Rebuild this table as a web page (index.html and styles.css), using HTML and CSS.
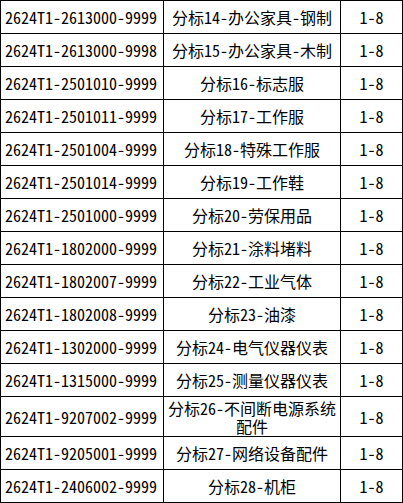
FILE: index.html
```
<!DOCTYPE html>
<html lang="zh-CN">
<head>
<meta charset="utf-8">
<link rel="stylesheet" href="styles.css">
</head>
<body>
<table class="grid">
<colgroup><col class="c1"><col class="c2"><col class="c3"></colgroup>
<tbody>
<tr><td class="code">2624T1-2613000-9999</td><td class="name">分标14-办公家具-钢制</td><td class="num">1-8</td></tr>
<tr><td class="code">2624T1-2613000-9998</td><td class="name">分标15-办公家具-木制</td><td class="num">1-8</td></tr>
<tr><td class="code">2624T1-2501010-9999</td><td class="name">分标16-标志服</td><td class="num">1-8</td></tr>
<tr><td class="code">2624T1-2501011-9999</td><td class="name">分标17-工作服</td><td class="num">1-8</td></tr>
<tr><td class="code">2624T1-2501004-9999</td><td class="name">分标18-特殊工作服</td><td class="num">1-8</td></tr>
<tr><td class="code">2624T1-2501014-9999</td><td class="name">分标19-工作鞋</td><td class="num">1-8</td></tr>
<tr><td class="code">2624T1-2501000-9999</td><td class="name">分标20-劳保用品</td><td class="num">1-8</td></tr>
<tr><td class="code">2624T1-1802000-9999</td><td class="name">分标21-涂料堵料</td><td class="num">1-8</td></tr>
<tr><td class="code">2624T1-1802007-9999</td><td class="name">分标22-工业气体</td><td class="num">1-8</td></tr>
<tr><td class="code">2624T1-1802008-9999</td><td class="name">分标23-油漆</td><td class="num">1-8</td></tr>
<tr><td class="code">2624T1-1302000-9999</td><td class="name">分标24-电气仪器仪表</td><td class="num">1-8</td></tr>
<tr><td class="code">2624T1-1315000-9999</td><td class="name">分标25-测量仪器仪表</td><td class="num">1-8</td></tr>
<tr class="tall"><td class="code">2624T1-9207002-9999</td><td class="name">分标26-不间断电源系统配件</td><td class="num">1-8</td></tr>
<tr><td class="code">2624T1-9205001-9999</td><td class="name">分标27-网络设备配件</td><td class="num">1-8</td></tr>
<tr><td class="code">2624T1-2406002-9999</td><td class="name">分标28-机柜</td><td class="num">1-8</td></tr>
</tbody>
</table>
</body>
</html>
```
FILE: styles.css
```
html, body {
  margin: 0;
  padding: 0;
  background: #fff;
}
.grid {
  border-collapse: collapse;
  table-layout: fixed;
  width: 402px;
  font-family: "Noto Sans Mono CJK SC", "Noto Sans CJK SC", "DejaVu Sans Mono", monospace;
  font-size: 16px;
  font-weight: 300;
  color: #000;
}
.c1 { width: 163px; }
.c2 { width: 177px; }
.c3 { width: 62px; }
.grid td {
  border: 1px solid #000;
  height: 32px;
  padding: 0 4px;
  line-height: 18px;
  box-sizing: border-box;
  vertical-align: middle;
}
.grid tr {
  height: 33px;
}
.grid tr.tall {
  height: 40px;
}
.grid tr.tall td {
  height: 40px;
}
.code {
  text-align: left;
  padding-left: 6px;
  white-space: nowrap;
}
.name {
  text-align: center;
}
.num {
  text-align: center;
}
```
